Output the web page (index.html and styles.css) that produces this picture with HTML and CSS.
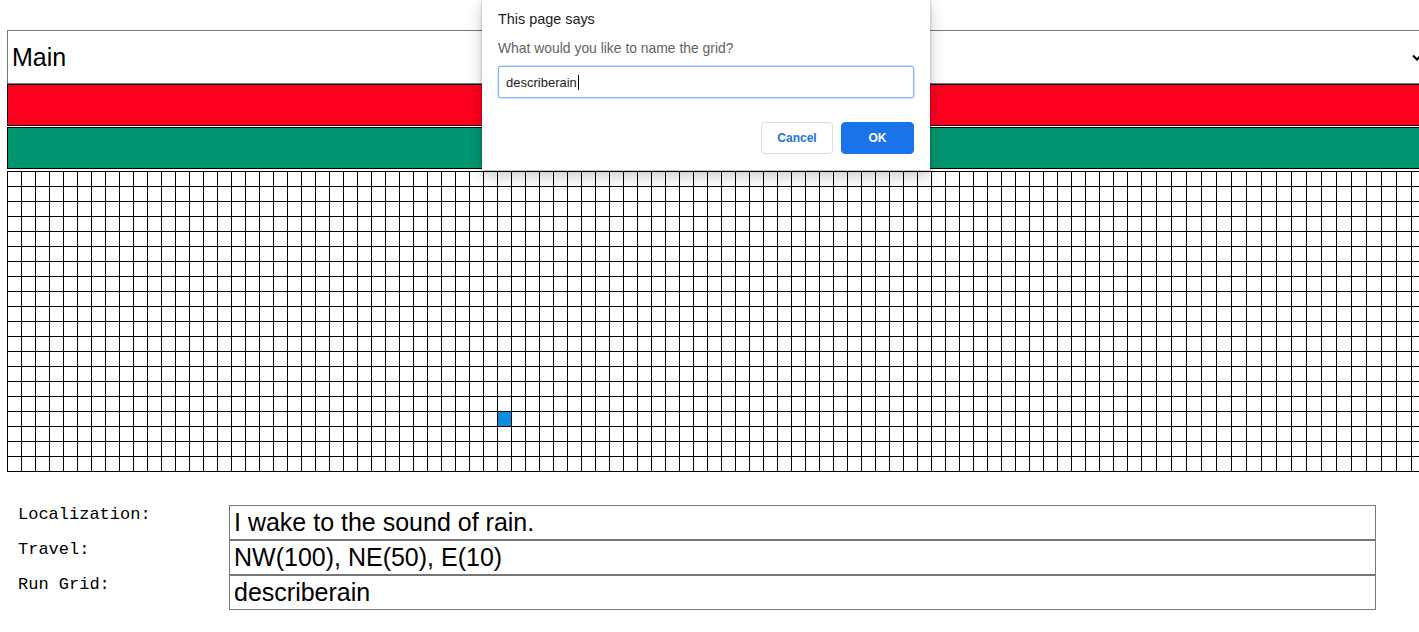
FILE: index.html
```html
<!DOCTYPE html>
<html lang="en">
<head>
<meta charset="utf-8">
<title>Grid</title>
<link rel="stylesheet" href="styles.css">
</head>
<body>
<main class="page">
  <div class="select">
    <span class="select-value">Main</span>
    <svg class="select-arrow" width="10" height="7" viewBox="0 0 10 7"><polyline points="1,1.5 5,5.5 9,1.5" fill="none" stroke="#000" stroke-width="2"/></svg>
  </div>
  <div class="bar bar--red"></div>
  <div class="bar bar--green"></div>
  <div class="grid" id="grid"></div>
  <form class="form">
    <label class="form-label">Localization:</label>
    <input class="form-input" type="text" value="I wake to the sound of rain.">
    <label class="form-label">Travel:</label>
    <input class="form-input" type="text" value="NW(100), NE(50), E(10)">
    <label class="form-label">Run Grid:</label>
    <input class="form-input" type="text" value="describerain">
  </form>
</main>
<div class="dialog">
  <div class="dialog-title">This page says</div>
  <div class="dialog-message">What would you like to name the grid?</div>
  <div class="dialog-input"><span>describerain</span><span class="caret"></span></div>
  <div class="dialog-actions">
    <button class="btn btn--cancel" type="button">Cancel</button>
    <button class="btn btn--ok" type="button">OK</button>
  </div>
</div>
<script src="script.js"></script>
</body>
</html>
```
FILE: styles.css
```css
html, body {
  margin: 0;
  padding: 0;
  overflow: hidden;
  background: #fff;
}
body {
  font-family: "Liberation Sans", Arial, sans-serif;
  color: #000;
}
.page {
  padding: 30px 0 0 7px;
}
.select {
  box-sizing: border-box;
  width: 1420px;
  height: 54px;
  border: 1px solid #767676;
  display: flex;
  align-items: center;
  justify-content: space-between;
  padding: 0 4px 0 4px;
  font-size: 25px;
}
.select-arrow {
  display: block;
  margin-top: 1px;
}
.bar {
  box-sizing: border-box;
  width: 1420px;
  height: 42px;
  border: 1px solid #000;
}
.bar--red {
  background: #ff001f;
  margin-top: 0;
}
.bar--green {
  background: #009670;
  margin-top: 1px;
}
.grid {
  margin-top: 2px;
  display: grid;
  grid-template-columns: repeat(81, 14px) repeat(19, 15px);
  grid-template-rows: repeat(20, 15px);
  width: max-content;
  border-left: 1px solid #000;
  border-top: 1px solid #000;
}
.cell {
  box-sizing: border-box;
  border-right: 1px solid #000;
  border-bottom: 1px solid #000;
}
.cell--active {
  background: #0a8fdc;
}
.form {
  margin: 33px 0 0 11px;
  display: grid;
  grid-template-columns: 211px 1147px;
  grid-auto-rows: 35px;
}
.form-label {
  font-family: "Liberation Mono", "Courier New", monospace;
  font-size: 17px;
  line-height: 19px;
  color: #000;
}
.form-input {
  box-sizing: border-box;
  width: 1147px;
  height: 35px;
  margin: 0;
  border: 1px solid #767676;
  padding: 0 4px;
  font-family: "Liberation Sans", Arial, sans-serif;
  font-size: 25px;
  color: #000;
  background: #fff;
  outline: none;
}
.dialog {
  position: absolute;
  left: 482px;
  top: 0;
  width: 448px;
  box-sizing: border-box;
  padding: 9px 16px 16px;
  background: #fff;
  box-shadow: 0 0 3px rgba(0,0,0,0.25), 0 6px 14px rgba(0,0,0,0.22);
}
.dialog-title {
  font-size: 14.4px;
  line-height: 20px;
  color: #202124;
}
.dialog-message {
  margin-top: 9px;
  font-size: 13.9px;
  line-height: 20px;
  color: #5f6368;
}
.dialog-input {
  margin-top: 8px;
  box-sizing: border-box;
  height: 32px;
  border: 1px solid #8ab4f8;
  box-shadow: 0 0 0 1px rgba(138,180,248,0.35);
  border-radius: 2px;
  padding: 0 7px;
  display: flex;
  align-items: center;
  font-size: 13px;
  color: #202124;
}
.caret {
  display: inline-block;
  width: 1px;
  height: 15px;
  background: #000;
  margin-left: 1px;
}
.dialog-actions {
  margin-top: 24px;
  display: flex;
  justify-content: flex-end;
  gap: 8px;
}
.btn {
  box-sizing: border-box;
  height: 32px;
  border-radius: 4px;
  font-family: "Liberation Sans", Arial, sans-serif;
  font-size: 12px;
  font-weight: bold;
  padding: 0;
  cursor: pointer;
}
.btn--cancel {
  width: 72px;
  border: 1px solid #dadce0;
  background: #fff;
  color: #1a73e8;
}
.btn--ok {
  width: 73px;
  border: 1px solid #1a73e8;
  background: #1a73e8;
  color: #fff;
}
```
FILE: script.js
```js
(function () {
  var grid = document.getElementById('grid');
  var rows = 20, cols = 100;
  var frag = document.createDocumentFragment();
  for (var r = 0; r < rows; r++) {
    for (var c = 0; c < cols; c++) {
      var cell = document.createElement('div');
      cell.className = 'cell';
      if (r === 16 && c === 35) cell.className += ' cell--active';
      frag.appendChild(cell);
    }
  }
  grid.appendChild(frag);
})();
```
